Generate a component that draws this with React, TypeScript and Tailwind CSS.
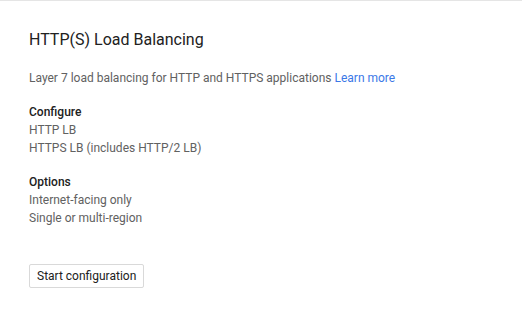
import React from "react";

export default function App() {
  return (
    <div className="w-[522px] h-[313px] bg-white border-t border-[#e5e5e5] font-['Roboto',sans-serif] text-[12px] text-[#212121]">
      <div className="pl-[29px] pt-[29px]">
        <h1 className="text-[16px] leading-[20px] text-[#212121]">HTTP(S) Load Balancing</h1>
        <p className="mt-[19px] leading-[18px] text-[#616161]">
          Layer 7 load balancing for HTTP and HTTPS applications{" "}
          <a className="text-[#3b78e7]">Learn more</a>
        </p>
        <div className="mt-[16px] leading-[18px]">
          <div className="font-medium text-[#212121]">Configure</div>
          <div className="text-[#616161]">HTTP LB</div>
          <div className="text-[#616161]">HTTPS LB (includes HTTP/2 LB)</div>
        </div>
        <div className="mt-[16px] leading-[18px]">
          <div className="font-medium text-[#212121]">Options</div>
          <div className="text-[#616161]">Internet-facing only</div>
          <div className="text-[#616161]">Single or multi-region</div>
        </div>
        <button className="mt-[37px] h-[24px] px-[7px] border border-[#d9d9d9] rounded-[2px] bg-white text-[12px] text-[#212121] leading-none">
          Start configuration
        </button>
      </div>
    </div>
  );
}
